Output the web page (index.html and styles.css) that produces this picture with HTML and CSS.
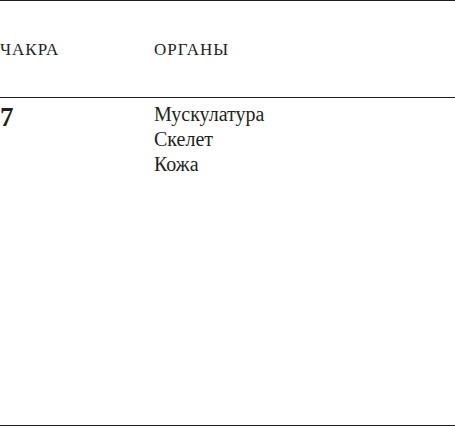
FILE: index.html
```html
<!DOCTYPE html>
<html lang="ru">
<head>
<meta charset="utf-8">
<link rel="stylesheet" href="styles.css">
</head>
<body>
<div class="table">
  <div class="row head">
    <div class="c1">ЧАКРА</div>
    <div class="c2">ОРГАНЫ</div>
  </div>
  <div class="row body">
    <div class="c1 num">7</div>
    <div class="c2 list">
      <div>Мускулатура</div>
      <div>Скелет</div>
      <div>Кожа</div>
    </div>
  </div>
</div>
</body>
</html>
```
FILE: styles.css
```css
html, body {
  margin: 0;
  padding: 0;
  background: #fff;
}
body {
  font-family: "Liberation Serif", "DejaVu Serif", serif;
  color: #231f20;
}
.table {
  width: 455px;
  height: 427px;
  display: flex;
  flex-direction: column;
}
.row {
  display: grid;
  grid-template-columns: 154px 1fr;
}
.head {
  border-top: 1px solid #231f20;
  border-bottom: 1px solid #231f20;
  height: 98px;
  align-items: center;
  font-size: 17px;
  letter-spacing: 1px;
  box-sizing: border-box;
  padding-top: 2px;
}
.body {
  flex: 1;
  border-bottom: 1px solid #231f20;
  margin-bottom: 1px;
  padding-top: 4px;
}
.num {
  font-size: 27px;
  font-weight: bold;
  line-height: 30px;
}
.list {
  font-size: 20px;
  line-height: 25px;
}
```
